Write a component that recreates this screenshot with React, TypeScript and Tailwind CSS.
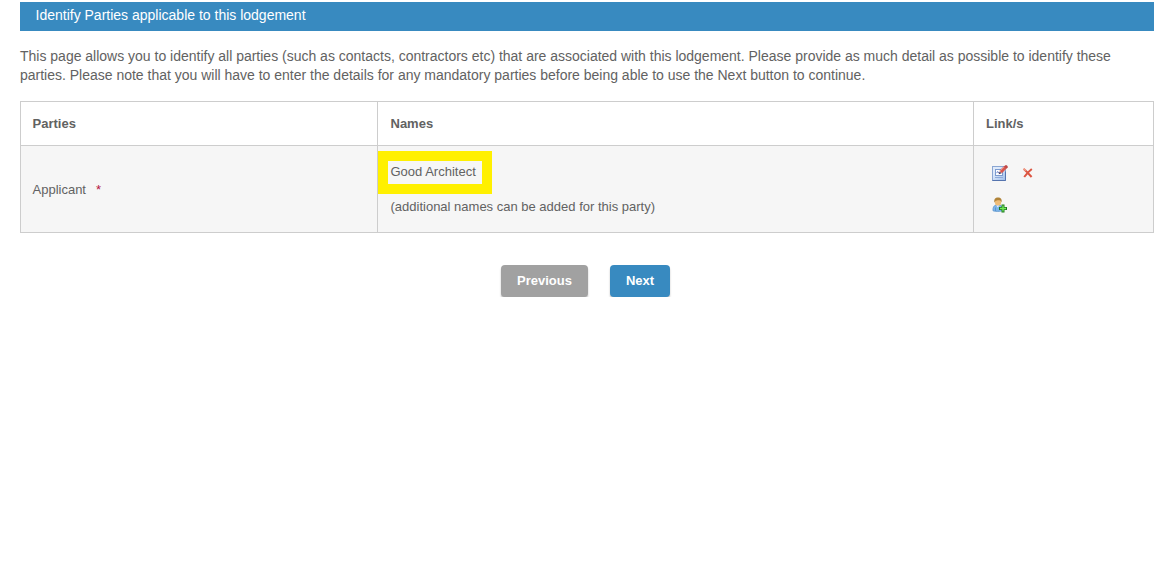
import React from "react";

const EditIcon = (): JSX.Element => (
  <svg width="16" height="16" viewBox="0 0 16 16">
    <defs>
      <linearGradient id="sheet" x1="0" y1="0" x2="1" y2="1">
        <stop offset="0.3" stopColor="#dfeafa" />
        <stop offset="1" stopColor="#9dbdea" />
      </linearGradient>
    </defs>
    <rect x="0.5" y="1.5" width="13" height="14" fill="url(#sheet)" stroke="#8ba6d2" />
    <path d="M0.5 15.5h13v-9" fill="none" stroke="#5574ae" />
    <rect x="3.5" y="4.5" width="7" height="6" fill="#fff" stroke="#7c9bcf" />
    <path d="M3 12.5h8" stroke="#8fabda" />
    <path d="M4.6 7.600l1.200-.8 1 .8" fill="none" stroke="#3a55ad" />
    <path d="M6.600 9.300l1-2.900 2 1.900z" fill="#43365a" />
    <path d="M8.700 7l4.600-4.700" stroke="#d9564c" strokeWidth="3.400" />
    <path d="M8.200 5.900l4.200-4.200" stroke="#f09c90" strokeWidth="0.9" />
    <path d="M12 1.500l1.200-1.200h1.600l.9.900v1.300l-1.200 1.200z" fill="#c04744" />
  </svg>
);

const DeleteIcon = (): JSX.Element => (
  <svg width="10" height="10" viewBox="0 0 10 10">
    <path d="M0.8 1C3.5 3.4 6 6 8.6 9M8.8 1C5.5 3.6 3.3 6 1.2 9" fill="none" stroke="#dc5642" strokeWidth="2" />
    <path d="M0.5 0.7l2.400 2" stroke="#f09a86" strokeWidth="1.600" />
  </svg>
);

const AddPersonIcon = (): JSX.Element => (
  <svg width="16" height="16" viewBox="0 0 16 16">
    <path d="M1 13.8c-.3-3 .7-5.3 3-5.8h3.4c2.2.4 3 2.6 2.8 5.8-3 .8-6.4.8-9.2 0z" fill="#7fb6ea" stroke="#5b93cc" strokeWidth="0.8" />
    <path d="M4.200 8.200l1.600 2.400 1.600-2.400z" fill="#e8f3fc" />
    <path d="M3.5 10.5v3.500" stroke="#4a86c8" strokeWidth="0.7" />
    <rect x="3" y="1.500" width="6" height="7" rx="2.500" fill="#efbd78" />
    <path d="M2.400 5.800C1.800 2.200 3.200.5 6 .5s4.200 1.700 3.600 5.300c-.3-1.700-1-2.400-2.200-2.600-1.600-.2-3.200.2-3.800.6z" fill="#b08338" />
    <path d="M9.500 7.500h3v2.500h2.500v3h-2.500v2.500h-3v-2.500h-2.500v-3h2.500z" fill="#1d7a20" />
    <path d="M11 8.500v6M8 11.500h6" stroke="#74ea5a" strokeWidth="1.300" />
  </svg>
);

const Parties = (): JSX.Element => {
  return (
    <div className="pt-0.5 pr-3 pl-5 font-['Liberation_Sans',Arial,sans-serif] text-[#626262]">
      <h1 className="h-[29px] bg-[#388ac0] pl-[15.5px] text-sm leading-[27px] text-white">
        Identify Parties applicable to this lodgement
      </h1>
      <p className="mt-4 text-sm leading-[19px] tracking-[-0.005px]">
        This page allows you to identify all parties (such as contacts, contractors etc) that are associated with this
        lodgement. Please provide as much detail as possible to identify these parties. Please note that you will have to
        enter the details for any mandatory parties before being able to use the Next button to continue.
      </p>

      <div className="mt-4 grid grid-cols-[357px_596px_1fr] grid-rows-[44px_87px] border-r border-b border-[#cdcdcd] text-[13px] *:border-t *:border-l *:border-[#cdcdcd]">
        <div className="flex items-center pl-[11.5px] font-bold">Parties</div>
        <div className="flex items-center pl-[12.5px] font-bold">Names</div>
        <div className="flex items-center pl-3 font-bold">Link/s</div>

        <div className="flex items-center bg-[#f6f6f6] pt-0.5 pl-[11.5px]">
          Applicant<span className="ml-2.5 text-[#b5173f]">*</span>
        </div>
        <div className="flex flex-col items-start bg-[#f6f6f6] pt-[5px]">
          <div className="h-[43px] w-[114px] border-[10px] border-[#fff000] pl-[2.5px] leading-[22px] whitespace-nowrap">
            Good Architect
          </div>
          <div className="mt-[5px] pl-[12.5px] leading-4">(additional names can be added for this party)</div>
        </div>
        <div className="flex flex-col gap-4 bg-[#f6f6f6] pt-[19px] pl-[18px]">
          <div className="flex items-center gap-[15px]">
            <EditIcon />
            <DeleteIcon />
          </div>
          <AddPersonIcon />
        </div>
      </div>

      <div className="mt-8 flex gap-[22px] pl-[481px] text-[13px] font-bold text-white">
        <button className="h-8 w-[87px] rounded bg-[#a1a1a1] shadow-[0_2px_2px_rgba(0,0,0,0.25)]">Previous</button>
        <button className="h-8 w-[60px] rounded bg-[#388ac0] shadow-[0_2px_2px_rgba(0,0,0,0.25)]">Next</button>
      </div>
    </div>
  );
};

export default Parties;
